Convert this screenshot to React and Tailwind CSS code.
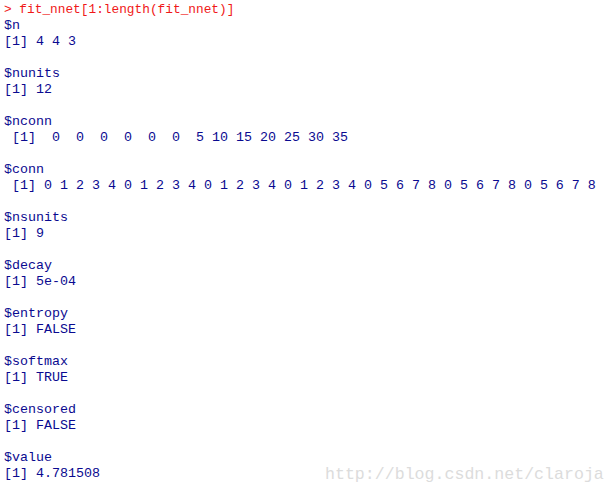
const output = [
    { prompt: true, text: '> fit_nnet[1:length(fit_nnet)]' },
    { text: '$n' },
    { text: '[1] 4 4 3' },
    { text: '' },
    { text: '$nunits' },
    { text: '[1] 12' },
    { text: '' },
    { text: '$nconn' },
    { text: ' [1]  0  0  0  0  0  0  5 10 15 20 25 30 35' },
    { text: '' },
    { text: '$conn' },
    { text: ' [1] 0 1 2 3 4 0 1 2 3 4 0 1 2 3 4 0 1 2 3 4 0 5 6 7 8 0 5 6 7 8 0 5 6 7 8' },
    { text: '' },
    { text: '$nsunits' },
    { text: '[1] 9' },
    { text: '' },
    { text: '$decay' },
    { text: '[1] 5e-04' },
    { text: '' },
    { text: '$entropy' },
    { text: '[1] FALSE' },
    { text: '' },
    { text: '$softmax' },
    { text: '[1] TRUE' },
    { text: '' },
    { text: '$censored' },
    { text: '[1] FALSE' },
    { text: '' },
    { text: '$value' },
    { text: '[1] 4.781508' },
];

export default function App() {
    return (
        <div className="relative h-[495px] w-[615px] overflow-hidden bg-white">
            <div className="pl-[4px] pt-[2px] font-['Liberation_Mono','Courier_New',monospace]">
                {output.map((line, i) =>
                    line.prompt ? (
                        <div
                            key={i}
                            className="h-[16px] whitespace-pre text-[12.8px] leading-[16px] text-[#f01818]"
                        >
                            {line.text}
                        </div>
                    ) : (
                        <div
                            key={i}
                            className="h-[16px] whitespace-pre text-[13.33px] leading-[16px] text-[#0a0a90]"
                        >
                            {line.text}
                        </div>
                    ),
                )}
            </div>

            {/* watermark */}
            <div className="absolute left-[325px] top-[465px] whitespace-pre font-['Liberation_Mono',monospace] text-[16.6px] leading-[20px] text-[#dcdcdc]">
                http://blog.csdn.net/claroja
            </div>
        </div>
    );
}
